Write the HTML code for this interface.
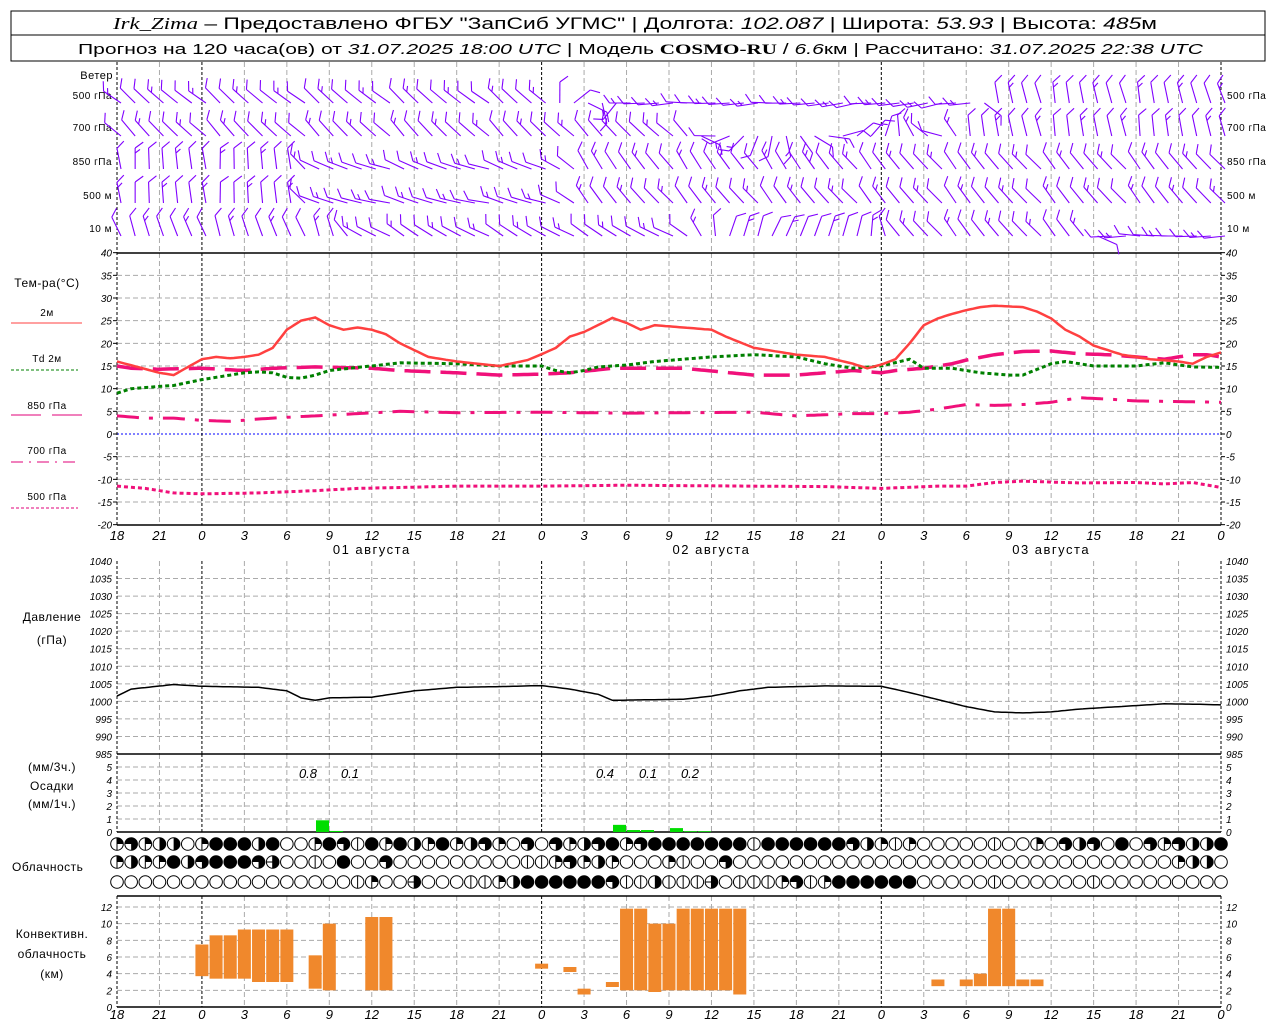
<!DOCTYPE html>
<html><head><meta charset="utf-8">
<style>
html,body{margin:0;padding:0;background:#fff;width:1280px;height:1024px;overflow:hidden}
svg{display:block}
text{font-family:"Liberation Sans",sans-serif}
.n{font-style:italic;font-size:10px;fill:#000}
</style></head><body>
<svg id="s" width="1280" height="1024" xmlns="http://www.w3.org/2000/svg">
<rect x="11" y="11" width="1254" height="50" fill="none" stroke="#000" stroke-width="1"/>
<line x1="11" y1="35" x2="1265" y2="35" stroke="#000"/>
<text x="113" y="29" font-size="17" textLength="1044" lengthAdjust="spacingAndGlyphs"><tspan font-style="italic" font-family="Liberation Serif">Irk_Zima</tspan> – Предоставлено ФГБУ "ЗапСиб УГМС" | Долгота: <tspan font-style="italic">102.087</tspan> | Широта: <tspan font-style="italic">53.93</tspan> | Высота: <tspan font-style="italic">485</tspan>м</text>
<text x="78" y="54" font-size="15" textLength="1125" lengthAdjust="spacingAndGlyphs">Прогноз на 120 часа(ов) от <tspan font-style="italic">31.07.2025 18:00 UTC</tspan>  | Модель <tspan font-weight="bold" font-family="Liberation Serif">COSMO-RU</tspan> / <tspan font-style="italic">6.6</tspan>км | Рассчитано: <tspan font-style="italic">31.07.2025 22:38 UTC</tspan></text>
<g id="g"></g>
</svg>
<script>
var NS="http://www.w3.org/2000/svg",G=document.getElementById('g');
function el(t,a,txt){var e=document.createElementNS(NS,t);for(var k in a)e.setAttribute(k,a[k]);if(txt!=null)e.textContent=txt;G.appendChild(e);return e;}
function X(h){return 117+h*1104/78;}
function ln(x1,y1,x2,y2,c,w,d){var a={x1:x1,y1:y1,x2:x2,y2:y2,stroke:c,'stroke-width':w||1};if(d)a['stroke-dasharray']=d;return el('line',a);}
function interp(k,h){for(var i=0;i<k.length-1;i++){if(h>=k[i][0]&&h<=k[i+1][0]){var t=(h-k[i][0])/(k[i+1][0]-k[i][0]);return k[i][1]+t*(k[i+1][1]-k[i][1]);}}return k[k.length-1][1];}
function vgrid(y1,y2){for(var k=1;k<26;k++){if(k==2||k==10||k==18)continue;ln(X(k*3),y1,X(k*3),y2,'#aaa',1,'5 3');}}
function hgrid(y){ln(117,y,1221,y,'#aaa',1,'5 3');}
vgrid(62,252);vgrid(253,525);vgrid(561,754);vgrid(754,832);vgrid(896,1007);
var TY=function(t){return 434-(t)*272/60;};
for(var t=-15;t<=35;t+=5){if(t!=0)hgrid(TY(t));}
for(var t=-20;t<=40;t+=5){var y=TY(t);el('text',{x:112,y:y+4,'text-anchor':'end','class':'n'},t);el('text',{x:1226,y:y+4,'class':'n'},t);ln(113,y,117,y,'#000');ln(1221,y,1225,y,'#000');}
ln(117,434,1221,434,'#00f',1,'2 2');
var PY=function(p){return 754-(p-985)*193/55;};
for(var p=990;p<1040;p+=5)hgrid(PY(p));
for(var p=985;p<=1040;p+=5){var y=PY(p);el('text',{x:112,y:y+4,'text-anchor':'end','class':'n','font-size':9},p);el('text',{x:1226,y:y+4,'class':'n','font-size':9},p);}
var RY=function(r){return 832-r*13;};
for(var r=1;r<=5;r++)hgrid(RY(r));
for(var r=0;r<=5;r++){el('text',{x:112,y:RY(r)+4,'text-anchor':'end','class':'n','font-size':9},r);el('text',{x:1226,y:RY(r)+4,'class':'n','font-size':9},r);}
var CY=function(c){return 1007-c*100/12;};
for(var c=2;c<=12;c+=2)hgrid(CY(c));
for(var c=0;c<=12;c+=2){el('text',{x:112,y:CY(c)+4,'text-anchor':'end','class':'n','font-size':9},c);el('text',{x:1226,y:CY(c)+4,'class':'n','font-size':9},c);}
[X(6),X(30),X(54)].forEach(function(x){ln(x,62,x,252,'#000',1,'3 2');ln(x,253,x,525,'#000',1,'3 2');ln(x,561,x,754,'#000',1,'3 2');ln(x,754,x,832,'#000',1,'3 2');ln(x,896,x,1007,'#000',1,'3 2');});
[[62,525],[561,832],[896,1007]].forEach(function(r){ln(117,r[0],117,r[1],'#000',1,'3 2');ln(1221,r[0],1221,r[1],'#000',1,'3 2');});
[253,525,754,832,896,1007].forEach(function(y){ln(117,y,1221,y,'#000',1.5);});
var lab=[18,21,0,3,6,9,12,15,18,21,0,3,6,9,12,15,18,21,0,3,6,9,12,15,18,21,0];
lab.forEach(function(v,i){el('text',{x:X(i*3),y:540,'text-anchor':'middle','font-size':13,'font-style':'italic'},v);el('text',{x:X(i*3),y:1019,'text-anchor':'middle','font-size':13,'font-style':'italic'},v);});
[['01',18],['02',42],['03',66]].forEach(function(d){el('text',{x:X(d[1]),y:554,'text-anchor':'middle','font-size':13,'letter-spacing':'1.5'},d[0]+' августа');});
function L(x,y,t,a,s){el('text',{x:x,y:y,'text-anchor':a||'middle','font-size':s||12,'letter-spacing':'0.5'},t);}
L(113,79,'Ветер','end',11);
[['500 гПа',99],['700 гПа',131],['850 гПа',165],['500 м',199],['10   м',232]].forEach(function(a){L(112,a[1],a[0],'end',10);L(1227,a[1],a[0],'start',10);});
L(47,287,'Тем-ра(°C)');L(47,316,'2м','middle',10);ln(11,323,82,323,'#ff4040',1);
L(47,362,'Td  2м','middle',10);ln(11,370,78,370,'#008000',1,'3 2');
L(47,409,'850 гПа','middle',10);ln(11,415,41,415,'#e0007a',1);ln(52,415,82,415,'#e0007a',1);
L(47,454,'700 гПа','middle',10);ln(11,462,78,462,'#e0007a',1,'12 6 2 6');
L(47,500,'500 гПа','middle',10);ln(11,508,78,508,'#e0007a',1,'3 2');
L(52,621,'Давление');L(52,644,'(гПа)');
L(52,771,'(мм/3ч.)');L(52,790,'Осадки');L(52,808,'(мм/1ч.)');
L(12,871,'Облачность','start');
L(52,938,'Конвективн.');L(52,958,'облачность');L(52,978,'(км)');
function curve(k,f,c,w,d){var pts=[];for(var h=0;h<=78;h+=0.25)pts.push(X(h).toFixed(1)+','+f(interp(k,h)).toFixed(1));var a={points:pts.join(' '),fill:'none',stroke:c,'stroke-width':w};if(d)a['stroke-dasharray']=d;el('polyline',a);}
var T2=[[0,16],[3,13.5],[4,13],[6,16.5],[7,17],[8,16.7],[9,17],[10,17.5],[11,19],[12,23],[13,25],[14,25.7],[15,24],[16,23],[17,23.5],[18,23],[19,22],[20,20],[21,18.5],[22,17],[24,16],[27,15],[29,16.3],[30,17.6],[31,19],[32,21.5],[33,22.5],[35,25.6],[36,24.5],[37,23],[38,24],[40,23.5],[42,23],[43,21.5],[45,19],[48,17.5],[50,17],[52,15.5],[53,14.5],[54,15.3],[55,16.5],[56,20],[57,24],[58,25.5],[59,26.5],[60,27.3],[61,28],[62,28.3],[64,28],[65,27],[66,25.5],[67,23],[68,21.5],[69,19.5],[70,18.5],[71,17.5],[72,17],[73,16.5],[75,16],[76,15.5],[77,17],[78,18]];
var TD=[[0,9],[1,10],[3,10.5],[4,10.7],[6,12],[8,13],[9,13.5],[10,13.7],[11,13.5],[12,12.5],[13,12.3],[14,13],[15,14],[17,14.7],[18,15],[20,15.7],[24,15.5],[27,15],[30,15],[31,14],[32,13.5],[33,14],[34,14.8],[36,15.2],[37,15.6],[38,16],[40,16.5],[42,17],[45,17.5],[48,17],[50,15.5],[52,14.5],[54,15],[56,16.5],[57,14.5],[59,14.5],[61,13.5],[63,13],[64,13],[66,15.5],[67,16],[69,15],[72,15],[74,15.7],[76,14.8],[78,14.7]];
var T85=[[0,15],[1,14.5],[3,14.3],[6,14.5],[9,14],[11,14.5],[14,14.8],[18,14.5],[20,14],[24,13.5],[27,13],[30,13.2],[32,13.5],[35,14.5],[40,14.5],[45,13],[48,13],[52,14],[54,13.5],[55,14],[57,14.5],[59,15.5],[60,16.3],[62,17.5],[64,18.2],[66,18.3],[68,17.7],[70,17.5],[72,17],[74,16.5],[76,17.5],[77,17.5],[78,17]];
var T70=[[0,4],[2,3.5],[4,3.5],[6,3],[8,2.8],[10,3.3],[12,3.7],[14,4],[17,4.5],[20,5],[24,4.7],[30,4.8],[36,4.6],[40,4.7],[45,4.8],[48,4],[52,4.5],[54,4.5],[56,4.8],[58,5.5],[60,6.5],[62,6.3],[64,6.5],[66,7],[68,8],[70,7.7],[72,7.3],[74,7.2],[78,7]];
var T50=[[0,-11.5],[2,-12],[4,-13],[6,-13.2],[10,-13],[14,-12.5],[17,-12],[20,-11.8],[24,-11.5],[30,-11.5],[36,-11.3],[45,-11.5],[50,-11.6],[54,-12],[58,-11.5],[60,-11.5],[62,-10.7],[64,-10.4],[66,-10.6],[68,-10.8],[72,-10.7],[74,-11],[76,-10.7],[78,-11.8]];
curve(T50,TY,'#f0107a',3,'4 3');
curve(T70,TY,'#f0107a',3,'22 10 4 10');
curve(T85,TY,'#f0107a',3.5,'26 10');
curve(TD,TY,'#008000',3,'4 3');
curve(T2,TY,'#ff4040',2.5);
var PR=[[0,1001.5],[1,1003.5],[4,1004.8],[6,1004.3],[10,1004],[12,1003],[13,1001],[14,1000.3],[15,1001],[18,1001.2],[21,1003],[24,1004],[27,1004.2],[30,1004.5],[32,1003.5],[34,1002],[35,1000.3],[40,1000.6],[42,1001.5],[44,1003],[46,1004],[50,1004.4],[54,1004.3],[56,1002.5],[58,1000.5],[60,998.5],[62,997],[64,996.7],[66,997],[68,997.8],[72,998.8],[74,999.3],[76,999.2],[78,999]];
curve(PR,PY,'#000',1.5);
[[316,0.9],[330,0.08],[613,0.55],[627,0.15],[641,0.15],[670,0.3],[684,0.06],[698,0.06]].forEach(function(b){el('rect',{x:b[0],y:832-b[1]*13,width:13,height:b[1]*13,fill:'#00dd00'});});
[[308,'0.8'],[350,'0.1'],[605,'0.4'],[648,'0.1'],[690,'0.2']].forEach(function(a){el('text',{x:a[0],y:778,'text-anchor':'middle','font-size':13,'font-style':'italic'},a[1]);});
var R=['qtqhhoqfffhfooqftifqfhqfqhtqototqhtfqtf','ffffffiffffffthqiqoooooiooqothtofotqthhff',
'qhqqfhtffftdooiofootoooooooooiiqtqhqooothq','qiootoooooooooooooooooooooooooooooooqhh',
'oooooooooooooooooiqoodoooiiqhfffffftiihooqdoii','iiidoiiiqtiqffffffoooooiooooooioooooooooo'];
function fix(s,n){while(s.length<n)s+='o';return s.slice(0,n);}
var rows=[fix(R[0],39)+fix(R[1],40),fix(R[2],39)+fix(R[3],40),fix(R[4],39)+fix(R[5],40)];
var ry=[844,862,882];
rows.forEach(function(s,ri){for(var h=0;h<79;h++){var cx=X(h),cy=ry[ri],r=6.3,c=s[h];
 if(c=='f'){el('circle',{cx:cx,cy:cy,r:r,fill:'#000',stroke:'#000'});continue;}
 el('circle',{cx:cx,cy:cy,r:r,fill:'#fff',stroke:'#000','stroke-width':1});
 var d='';
 if(c=='q')d='M'+cx+','+cy+'V'+(cy-r)+'A'+r+','+r+' 0 0 1 '+(cx+r)+','+cy+'Z';
 if(c=='h'||c=='d')d='M'+cx+','+(cy-r)+'A'+r+','+r+' 0 0 1 '+cx+','+(cy+r)+'Z';
 if(c=='t')d='M'+cx+','+cy+'H'+(cx-r)+'A'+r+','+r+' 0 1 1 '+cx+','+(cy+r)+'Z';
 if(d)el('path',{d:d,fill:'#000'});
 if(c=='i'||c=='q'||c=='d')ln(cx,cy-r,cx,cy+r,'#000',1);
 if(c=='d')ln(cx-r,cy,cx+r,cy,'#000',1);
}});
[[6,3.7,7.5],[7,3.4,8.6],[8,3.4,8.6],[9,3.4,9.3],[10,3,9.3],[11,3,9.3],[12,3,9.3],[14,2.2,6.2],[15,2,10],[18,2,10.8],[19,2,10.8],
[30,4.6,5.2],[32,4.2,4.8],[33,1.5,2.2],[35,2.4,3],[36,2,11.8],[37,2,11.8],[38,1.8,10],[39,2,10],[40,2,11.8],[41,2,11.8],[42,2,11.8],[43,2,11.8],[44,1.5,11.8],
[58,2.5,3.3],[60,2.5,3.3],[61,2.5,4],[62,2.5,11.8],[63,2.5,11.8],[64,2.5,3.3],[65,2.5,3.3]].forEach(function(b){el('rect',{x:X(b[0])-6.5,y:CY(b[2]),width:13,height:CY(b[1])-CY(b[2]),fill:'#f0882c'});});
var lv=[[95,[[0,-140],[30,-140],[36,180],[60,170],[62,-100],[78,-105]]],
[128,[[0,-135],[40,-135],[42,180],[58,-160],[60,-100],[78,-100]]],
[161,[[0,-95],[12,-95],[14,-160],[30,-160],[33,-125],[50,-125],[54,-130],[78,-130]]],
[195,[[0,-95],[12,-95],[14,-165],[30,-165],[33,-130],[48,-130],[52,-130],[78,-130]]],
[228,[[0,-110],[15,-110],[17,-150],[40,-150],[43,-70],[52,-70],[55,-130],[68,-130],[70,180],[78,180]]]];
lv.forEach(function(L,li){for(var h=0;h<=78;h++){var a=interp(L[1],h)+((h*37+li*13)%13-6);var rad=a*Math.PI/180,len=21;
 var x0=X(h)+4,y0=L[0]+8,x1=x0+len*Math.cos(rad),y1=y0+len*Math.sin(rad);
 ln(x0,y0,x1,y1,'#8000ff',1.1);
 var nb=1+((h+li)%3==0?1:0);
 for(var b=0;b<nb;b++){var bx=x0+(len-b*5)*Math.cos(rad),by=y0+(len-b*5)*Math.sin(rad);var ra=rad+Math.PI*0.3;var bl=b==0?10:6;ln(bx,by,bx+bl*Math.cos(ra),by+bl*Math.sin(ra),'#8000ff',1.1);}
}});
</script>
</body></html>
